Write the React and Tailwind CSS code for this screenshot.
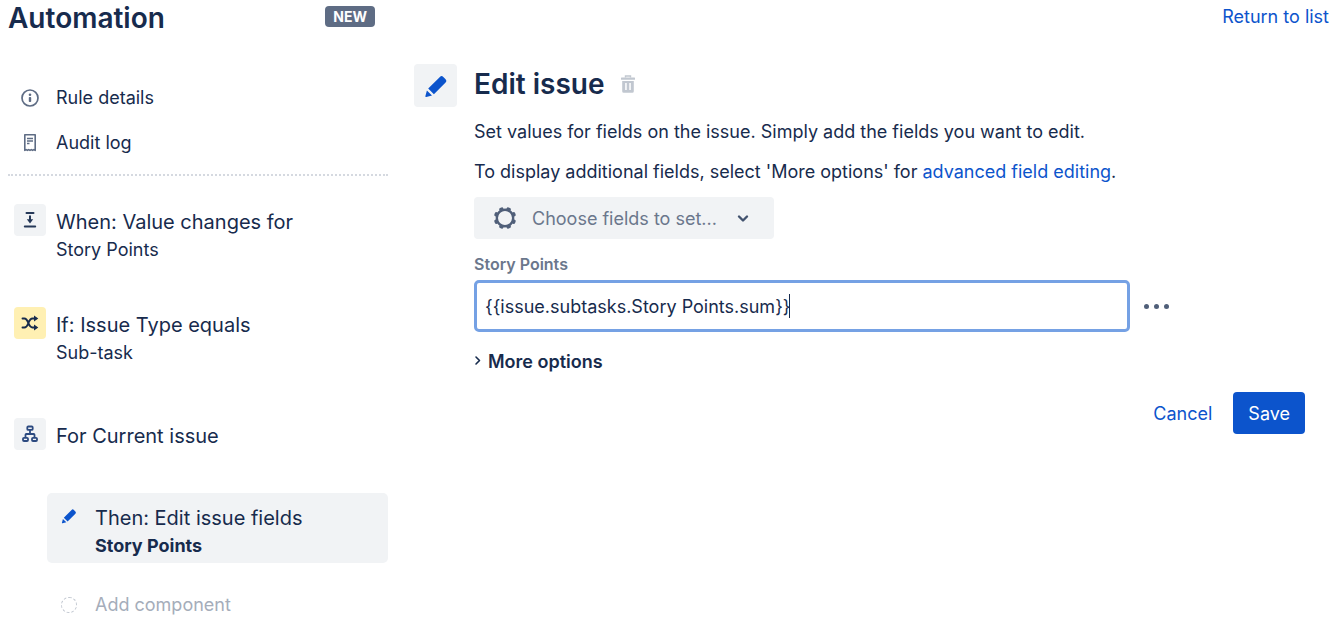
import React from "react";

function InfoIcon() {
  return (
    <svg width="20" height="20" viewBox="0 0 20 20" fill="none" aria-hidden="true">
      <circle cx="10" cy="10" r="8" stroke="#5e6c84" strokeWidth="1.7" />
      <circle cx="10" cy="6.8" r="1.3" fill="#5e6c84" />
      <rect x="8.8" y="9" width="2.4" height="5" rx="0.8" fill="#5e6c84" />
    </svg>
  );
}

function LogIcon() {
  return (
    <svg width="20" height="20" viewBox="0 0 20 20" fill="none" aria-hidden="true">
      <path d="M4.8 1.8h10.4v15.600l-1.300-.8-1.300.8-1.300-.8-1.300.8-1.300-.8-1.300.8-1.300-.8-1.300.8z" stroke="#5e6c84" strokeWidth="1.6" strokeLinejoin="round" />
      <path d="M7 5.500h6M7 8h6M7 10.500h2.500" stroke="#5e6c84" strokeWidth="1.500" />
    </svg>
  );
}

function TriggerIcon() {
  return (
    <svg width="20" height="20" viewBox="0 0 20 20" fill="none" aria-hidden="true">
      <path d="M6.500 3h7M4.800 16.500h10.400" stroke="#253858" strokeWidth="2" strokeLinecap="round" />
      <path d="M10 5.500v5" stroke="#253858" strokeWidth="2" />
      <path d="M6.800 9.300h6.400L10 13.500z" fill="#253858" />
    </svg>
  );
}

function ShuffleIcon() {
  return (
    <svg width="20" height="20" viewBox="0 0 20 20" fill="none" aria-hidden="true">
      <path d="M2.500 5.500h1.800c4.700 0 3.400 9 8.200 9h3M2.500 14.500h1.800c4.700 0 3.400-9 8.200-9h3" stroke="#172b4d" strokeWidth="1.900" strokeLinecap="round" />
      <path d="M14 2.500 18.300 5.500 14 8.500zM14 11.500l4.300 3-4.300 3z" fill="#172b4d" />
    </svg>
  );
}

function BranchIcon() {
  return (
    <svg width="20" height="20" viewBox="0 0 20 20" fill="none" stroke="#2c4a80" strokeWidth="1.800" strokeLinejoin="round" aria-hidden="true">
      <rect x="7.300" y="2.500" width="5.400" height="3.400" rx="1" />
      <rect x="3" y="13.800" width="5" height="3.200" rx="1" />
      <rect x="12" y="13.800" width="5" height="3.200" rx="1" />
      <path d="M10 6v4M5.500 13.500V10.800q0-.8.800-.8h7.400q.8 0 .8.800v2.700" />
    </svg>
  );
}

function PencilIcon({ className }) {
  return (
    <svg className={className} viewBox="0 0 24 24" fill="#0c54cc" aria-hidden="true">
      <path d="M4.200 14.600 15.900 2.900a2.400 2.400 0 0 1 3.400 0l2.300 2.300a2.400 2.400 0 0 1 0 3.400L9.900 20.300z" />
      <path d="M2.900 16.500 8 21.400 2.300 23a.7.700 0 0 1-.9-.9z" />
    </svg>
  );
}

function TrashIcon() {
  return (
    <svg width="20" height="20" viewBox="0 0 20 20" aria-hidden="true">
      <path d="M7.500 3.500V2h5v1.500" fill="none" stroke="#c1c7d0" strokeWidth="1.400" />
      <rect x="3" y="3.500" width="14" height="2.200" rx=".5" fill="#c1c7d0" />
      <path fillRule="evenodd" d="M4.200 7h11.600v10.200a1.500 1.500 0 0 1-1.500 1.500H5.700a1.500 1.500 0 0 1-1.500-1.500zM7.200 9v7h1.500V9zM11.300 9v7h1.500V9z" fill="#c1c7d0" />
    </svg>
  );
}

const teeth = [22.5, 67.5, 112.5, 157.5, 202.5, 247.5, 292.5, 337.5];

function GearIcon() {
  return (
    <svg width="24" height="24" viewBox="0 0 24 24" fill="none" aria-hidden="true">
      <circle cx="12" cy="12" r="8.200" stroke="#505f79" strokeWidth="2.400" />
      {teeth.map((angle) => (
        <rect key={angle} x="9.800" y="0.800" width="4.400" height="3.800" rx="1.500" fill="#505f79" transform={`rotate(${angle} 12 12)`} />
      ))}
    </svg>
  );
}

const steps = [
  { title: "When: Value changes for", detail: "Story Points", Icon: TriggerIcon, tile: "bg-[#f1f3f5]", space: "mb-[43px]" },
  { title: "If: Issue Type equals", detail: "Sub-task", Icon: ShuffleIcon, tile: "bg-[#fff0b3]", space: "mb-[51px]" },
  { title: "For Current issue", Icon: BranchIcon, tile: "bg-[#f1f3f5]", space: "mb-[43px]" },
];

function Sidebar() {
  return (
    <aside className="w-[380px] shrink-0">
      <header className="flex h-9 items-start justify-between pt-[6px] pr-[13px]">
        <h1 className="text-[28px] leading-6 font-semibold">Automation</h1>
        <span className="flex h-[21px] items-center rounded-[4px] bg-[#5e6c84] px-2 text-[14px] leading-5 font-bold text-white">NEW</span>
      </header>

      <nav className="mt-[39px] border-b-2 border-dotted border-[#d5d9e0] pb-[9px]">
        <a href="#details" className="flex h-[45px] items-center gap-4 pl-3 text-[18px]">
          <InfoIcon />
          Rule details
        </a>
        <a href="#audit" className="flex h-[45px] items-center gap-4 pl-3 text-[18px]">
          <LogIcon />
          Audit log
        </a>
      </nav>

      <ol className="mt-7">
        {steps.map(({ title, detail, Icon, tile, space }) => (
          <li key={title} className={space}>
            <button type="button" className="flex w-full items-start gap-[10px] pl-[6px] text-left">
              <span className={`flex size-8 items-center justify-center rounded-[4px] ${tile}`}>
                <Icon />
              </span>
              <span className="pt-1 leading-7">
                <span className="block text-[20px]">{title}</span>
                {detail && <span className="block text-[18px]">{detail}</span>}
              </span>
            </button>
          </li>
        ))}
        <li className="pl-[39px]">
          <button type="button" className="flex w-full items-start gap-4 rounded-[5px] bg-[#f1f3f5] px-3 pt-[11px] pb-[3px] text-left">
            <span className="flex h-6 w-5 items-center justify-center">
              <PencilIcon className="size-4" />
            </span>
            <span className="leading-7">
              <span className="block text-[20px]">Then: Edit issue fields</span>
              <span className="block text-[18px] font-bold">Story Points</span>
            </span>
          </button>
        </li>
        <li className="mt-7 pl-[39px]">
          <button type="button" className="flex items-center gap-4 pl-3 text-[18px] leading-7 text-[#a5adba]">
            <span className="flex w-5 justify-center">
              <span className="size-4 rounded-full border border-dashed border-[#c1c7d0]" />
            </span>
            Add component
          </button>
        </li>
      </ol>
    </aside>
  );
}

function Editor() {
  return (
    <main className="min-w-0 flex-1">
      <div className="flex h-8 items-center justify-end pr-2 text-[18px]">
        <a href="#rules" className="text-[#0c54cc]">Return to list</a>
      </div>

      <section className="mt-8 flex items-start gap-[17px]">
        <span className="flex size-[43px] shrink-0 items-center justify-center rounded-[4px] bg-[#f1f3f5]">
          <PencilIcon className="size-6" />
        </span>
        <form className="min-w-0 flex-1 pr-8" onSubmit={(e) => e.preventDefault()}>
          <div className="flex h-10 items-center gap-[14px]">
            <h2 className="text-[28px] leading-10 font-semibold">Edit issue</h2>
            <button type="button" aria-label="Delete">
              <TrashIcon />
            </button>
          </div>
          <p className="mt-[14px] text-[18px] leading-7">
            Set values for fields on the issue. Simply add the fields you want to edit.
          </p>
          <p className="mt-3 text-[18px] leading-7">
            To display additional fields, select 'More options' for{" "}
            <a href="#advanced" className="text-[#0c54cc]">advanced field editing</a>.
          </p>

          <div className="relative mt-[11px] w-[300px]">
            <select aria-label="Choose fields to set" className="h-[42px] w-full appearance-none rounded-[4px] bg-[#f1f3f5] pr-12 pl-[58px] text-[18px] text-[#6b778c] outline-none">
              <option>Choose fields to set...</option>
            </select>
            <span className="pointer-events-none absolute inset-y-0 left-[19px] flex items-center">
              <GearIcon />
            </span>
            <span className="pointer-events-none absolute inset-y-0 right-6 flex items-center">
              <svg width="14" height="14" viewBox="0 0 14 14" fill="none" aria-hidden="true">
                <path d="m3 5.500 4 4 4-4" stroke="#42526e" strokeWidth="2.400" strokeLinecap="round" strokeLinejoin="round" />
              </svg>
            </span>
          </div>

          <label htmlFor="story-points" className="mt-[13px] block text-[16px] leading-6 font-semibold text-[#6b778c]">
            Story Points
          </label>
          <div className="mt-1 flex items-center gap-[14px] pr-[136px]">
            <div className="relative min-w-0 flex-1">
              <input
                id="story-points"
                type="text"
                defaultValue="{{issue.subtasks.Story Points.sum}}"
                className="block h-[52px] w-full rounded-[5px] border-3 border-[#75a1e4] bg-white px-2 text-[18px] caret-transparent outline-none"
              />
              <span className="absolute top-[14px] left-[315px] h-6 w-px bg-[#172b4d]" aria-hidden="true" />
            </div>
            <button type="button" aria-label="Field actions" className="flex h-6 w-[25px] items-center justify-between">
              <span className="size-[5px] rounded-full bg-[#505f79]" />
              <span className="size-[5px] rounded-full bg-[#505f79]" />
              <span className="size-[5px] rounded-full bg-[#505f79]" />
            </button>
          </div>

          <button type="button" className="mt-4 flex items-center gap-[6px] text-[18px] leading-7 font-semibold">
            <svg width="8" height="14" viewBox="0 0 8 14" fill="none" aria-hidden="true">
              <path d="m2 2 3.500 3.500L2 9" stroke="#172b4d" strokeWidth="1.600" strokeLinecap="round" strokeLinejoin="round" />
            </svg>
            More options
          </button>

          <div className="mt-4 flex items-center justify-end gap-[21px] text-[18px]">
            <button type="button" className="text-[#0c54cc]">Cancel</button>
            <button type="submit" className="h-[42px] rounded-[4px] bg-[#0c54cc] px-[15px] text-white">Save</button>
          </div>
        </form>
      </section>
    </main>
  );
}

export default function App() {
  return (
    <div className="flex min-h-screen gap-[26px] bg-white pl-2 font-['Inter','Liberation_Sans',sans-serif] text-[#172b4d]">
      <Sidebar />
      <Editor />
    </div>
  );
}
